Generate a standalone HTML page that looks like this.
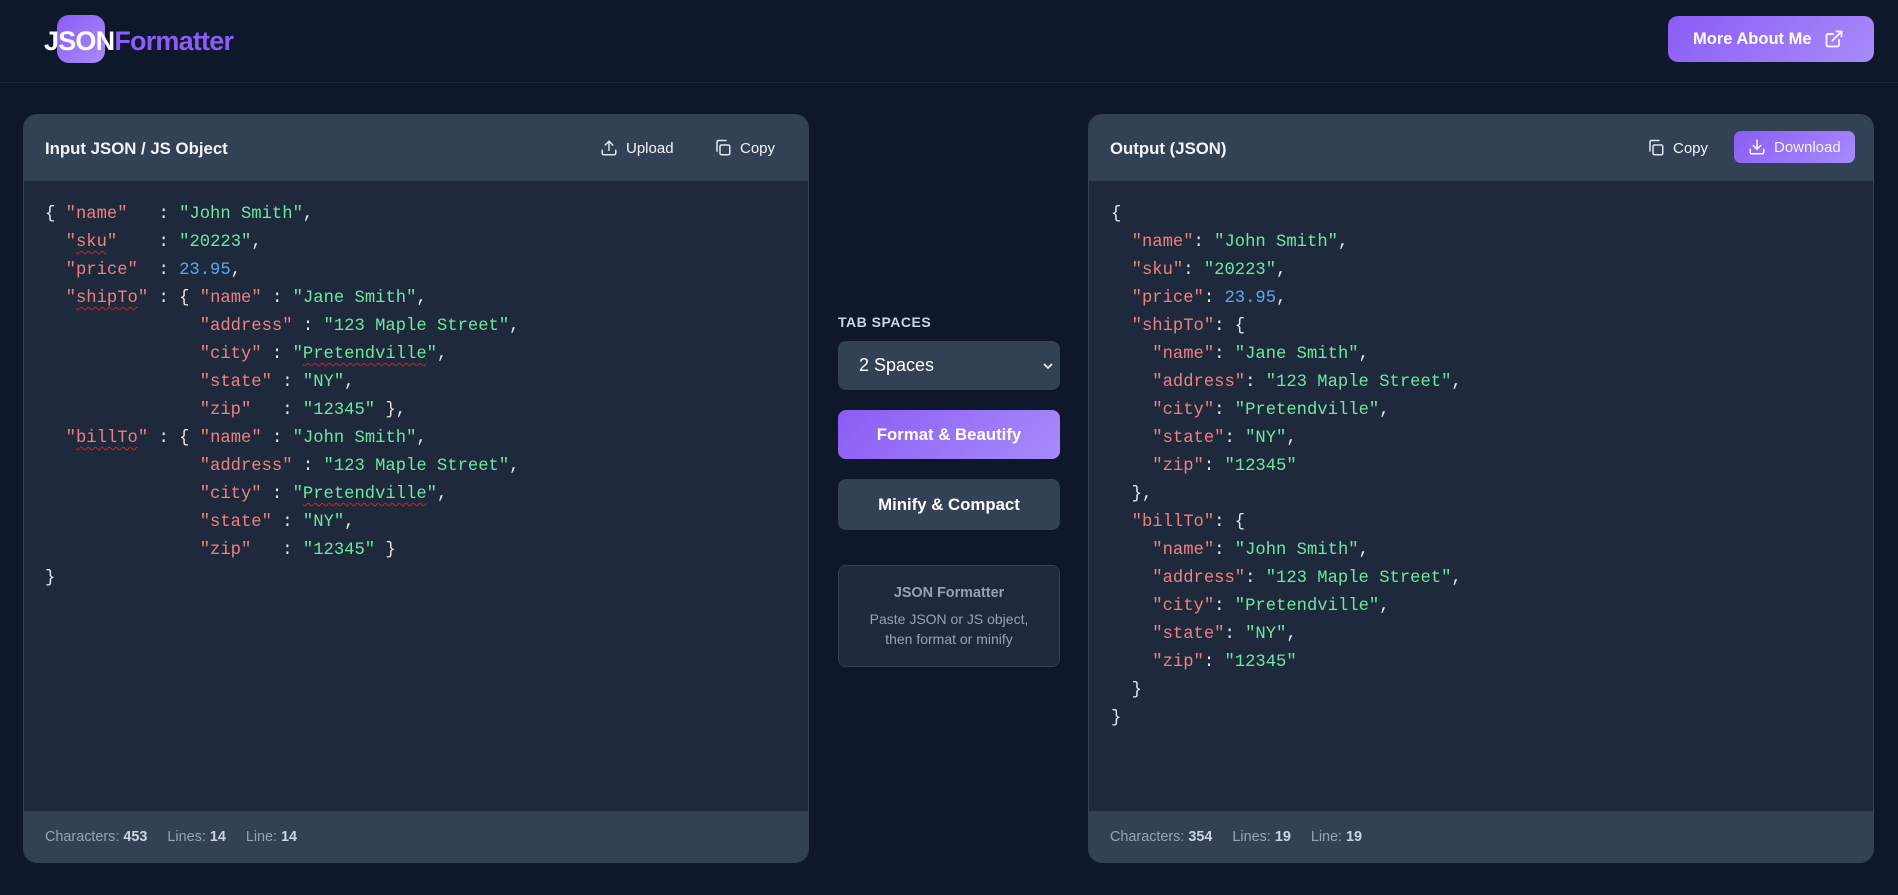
<!DOCTYPE html>
<html><head><meta charset="utf-8"><style>
*{box-sizing:border-box;margin:0;padding:0}
body{width:1898px;height:895px;background:#0f172a;font-family:"Liberation Sans",sans-serif;overflow:hidden;position:relative;color:#f1f5f9}
.hdr{position:absolute;left:0;top:0;width:1898px;height:83px;border-bottom:1px solid #1e293b;background:#0f172a}
.logobox{position:absolute;left:57px;top:15px;width:48px;height:48px;border-radius:12px;background:linear-gradient(135deg,#8b5cf6,#a78bfa)}
.logo{position:absolute;left:44px;top:26px;font-size:27px;font-weight:700;letter-spacing:-0.8px}
.logo .w{color:#fff}.logo .p{color:#8b5cf6}
.more{position:absolute;left:1668px;top:16px;width:206px;height:46px;border-radius:10px;background:linear-gradient(135deg,#8b5cf6,#a78bfa);color:#fff;font-weight:700;font-size:16.5px;display:flex;align-items:center;padding-left:25px;gap:12px}
.panel{position:absolute;top:114px;height:749px;border-radius:14px;background:#1e293b;overflow:hidden;border:1px solid #334155}
.ph{height:66px;background:#334155;position:relative}
.ph .t{position:absolute;left:21px;top:24px;font-size:16.8px;font-weight:700;color:#f1f5f9}
.btn{position:absolute;top:20px;height:26px;display:flex;align-items:center;gap:8px;font-size:15px;color:#f1f5f9}
.pf{position:absolute;left:0;right:0;bottom:0;height:51px;background:#334155;font-size:14.4px;color:#94a3b8;padding-left:21px;display:flex;align-items:center;gap:20px}
.pf b{color:#cbd5e1}
pre{position:absolute;top:86px;font-family:"Liberation Mono",monospace;font-size:17.2px;line-height:28px;color:#e2e8f0}
.k{color:#f08080}.s{color:#6ee7a0}.n{color:#60a5fa}.b{color:#ece6d6}
.sq{text-decoration:underline wavy #e11d1d;text-decoration-thickness:1px;text-underline-offset:4px}
.lbl{position:absolute;left:838px;top:314px;font-size:14px;font-weight:700;color:#cbd5e1;letter-spacing:0.5px}
.sel{position:absolute;left:838px;top:341px;width:222px;height:49px;border-radius:8px;background:#334155;color:#fff;font-size:18px;padding-left:21px;display:flex;align-items:center}
.fb{position:absolute;left:838px;width:222px;height:50px;border-radius:8px;color:#fff;font-weight:700;font-size:16.8px;display:flex;align-items:center;justify-content:center}
.info{position:absolute;left:838px;top:565px;width:222px;height:102px;border:1px solid #334155;border-radius:8px;background:#1e293b;text-align:center;color:#94a3b8}
</style></head><body>
<div class="hdr">
<div class="logobox"></div>
<div class="logo"><span class="w">JSON</span><span class="p">Formatter</span></div>
<div class="more">More About Me <svg width="20" height="20" viewBox="0 0 24 24" fill="none" stroke="#fff" stroke-width="2" stroke-linecap="round" stroke-linejoin="round"><path d="M18 13v6a2 2 0 0 1-2 2H5a2 2 0 0 1-2-2V8a2 2 0 0 1 2-2h6"/><path d="M15 3h6v6"/><path d="M10 14L21 3"/></svg></div>
</div>

<div class="panel" style="left:23px;width:786px">
<div class="ph"><div class="t">Input JSON / JS Object</div>
<div class="btn" style="left:576px"><svg width="18" height="18" viewBox="0 0 24 24" fill="none" stroke="#e2e8f0" stroke-width="2" stroke-linecap="round" stroke-linejoin="round"><path d="M21 15v4a2 2 0 0 1-2 2H5a2 2 0 0 1-2-2v-4"/><path d="M17 8l-5-5-5 5"/><path d="M12 3v12"/></svg>Upload</div>
<div class="btn" style="left:690px"><svg width="18" height="18" viewBox="0 0 24 24" fill="none" stroke="#e2e8f0" stroke-width="2" stroke-linecap="round" stroke-linejoin="round"><rect x="8" y="8" width="13" height="13" rx="2"/><path d="M4 16V4a2 2 0 0 1 2-2h10"/></svg>Copy</div>
</div>
<pre style="left:21px">{ <span class="k">"name"</span>   : <span class="s">"John Smith"</span>,
  <span class="k">"<span class="sq">sku</span>"</span>    : <span class="s">"20223"</span>,
  <span class="k">"price"</span>  : <span class="n">23.95</span>,
  <span class="k">"<span class="sq">shipTo</span>"</span> : <span class="b">{</span> <span class="k">"name"</span> : <span class="s">"Jane Smith"</span>,
               <span class="k">"address"</span> : <span class="s">"123 Maple Street"</span>,
               <span class="k">"city"</span> : <span class="s">"<span class="sq">Pretendville</span>"</span>,
               <span class="k">"state"</span> : <span class="s">"NY"</span>,
               <span class="k">"zip"</span>   : <span class="s">"12345"</span> <span class="b">}</span>,
  <span class="k">"<span class="sq">billTo</span>"</span> : <span class="b">{</span> <span class="k">"name"</span> : <span class="s">"John Smith"</span>,
               <span class="k">"address"</span> : <span class="s">"123 Maple Street"</span>,
               <span class="k">"city"</span> : <span class="s">"<span class="sq">Pretendville</span>"</span>,
               <span class="k">"state"</span> : <span class="s">"NY"</span>,
               <span class="k">"zip"</span>   : <span class="s">"12345"</span> <span class="b">}</span>
}</pre>
<div class="pf"><span>Characters: <b>453</b></span><span>Lines: <b>14</b></span><span>Line: <b>14</b></span></div>
</div>

<div class="lbl">TAB SPACES</div>
<div class="sel">2 Spaces<svg style="position:absolute;right:6px;top:19px" width="12" height="12" viewBox="0 0 24 24" fill="none" stroke="#fff" stroke-width="3.5" stroke-linecap="round" stroke-linejoin="round"><path d="M5 9l7 7 7-7"/></svg></div>
<div class="fb" style="top:410px;height:49px;background:linear-gradient(135deg,#8b5cf6,#a78bfa)">Format &amp; Beautify</div>
<div class="fb" style="top:479px;height:51px;background:#334155">Minify &amp; Compact</div>
<div class="info"><div style="margin-top:19px;font-size:14.4px;font-weight:700">JSON Formatter</div><div style="margin-top:8px;font-size:14px;line-height:20px">Paste JSON or JS object,<br>then format or minify</div></div>

<div class="panel" style="left:1088px;width:786px">
<div class="ph"><div class="t">Output (JSON)</div>
<div class="btn" style="left:558px"><svg width="18" height="18" viewBox="0 0 24 24" fill="none" stroke="#e2e8f0" stroke-width="2" stroke-linecap="round" stroke-linejoin="round"><rect x="8" y="8" width="13" height="13" rx="2"/><path d="M4 16V4a2 2 0 0 1 2-2h10"/></svg>Copy</div>
<div class="btn" style="left:645px;top:16px;height:32px;width:121px;border-radius:7px;background:linear-gradient(135deg,#8b5cf6,#a78bfa);padding-left:14px"><svg width="18" height="18" viewBox="0 0 24 24" fill="none" stroke="#fff" stroke-width="2" stroke-linecap="round" stroke-linejoin="round"><path d="M21 15v4a2 2 0 0 1-2 2H5a2 2 0 0 1-2-2v-4"/><path d="M7 10l5 5 5-5"/><path d="M12 15V3"/></svg>Download</div>
</div>
<pre style="left:22px">{
  <span class="k">"name"</span>: <span class="s">"John Smith"</span>,
  <span class="k">"sku"</span>: <span class="s">"20223"</span>,
  <span class="k">"price"</span>: <span class="n">23.95</span>,
  <span class="k">"shipTo"</span>: {
    <span class="k">"name"</span>: <span class="s">"Jane Smith"</span>,
    <span class="k">"address"</span>: <span class="s">"123 Maple Street"</span>,
    <span class="k">"city"</span>: <span class="s">"Pretendville"</span>,
    <span class="k">"state"</span>: <span class="s">"NY"</span>,
    <span class="k">"zip"</span>: <span class="s">"12345"</span>
  },
  <span class="k">"billTo"</span>: {
    <span class="k">"name"</span>: <span class="s">"John Smith"</span>,
    <span class="k">"address"</span>: <span class="s">"123 Maple Street"</span>,
    <span class="k">"city"</span>: <span class="s">"Pretendville"</span>,
    <span class="k">"state"</span>: <span class="s">"NY"</span>,
    <span class="k">"zip"</span>: <span class="s">"12345"</span>
  }
}</pre>
<div class="pf"><span>Characters: <b>354</b></span><span>Lines: <b>19</b></span><span>Line: <b>19</b></span></div>
</div>
</body></html>
